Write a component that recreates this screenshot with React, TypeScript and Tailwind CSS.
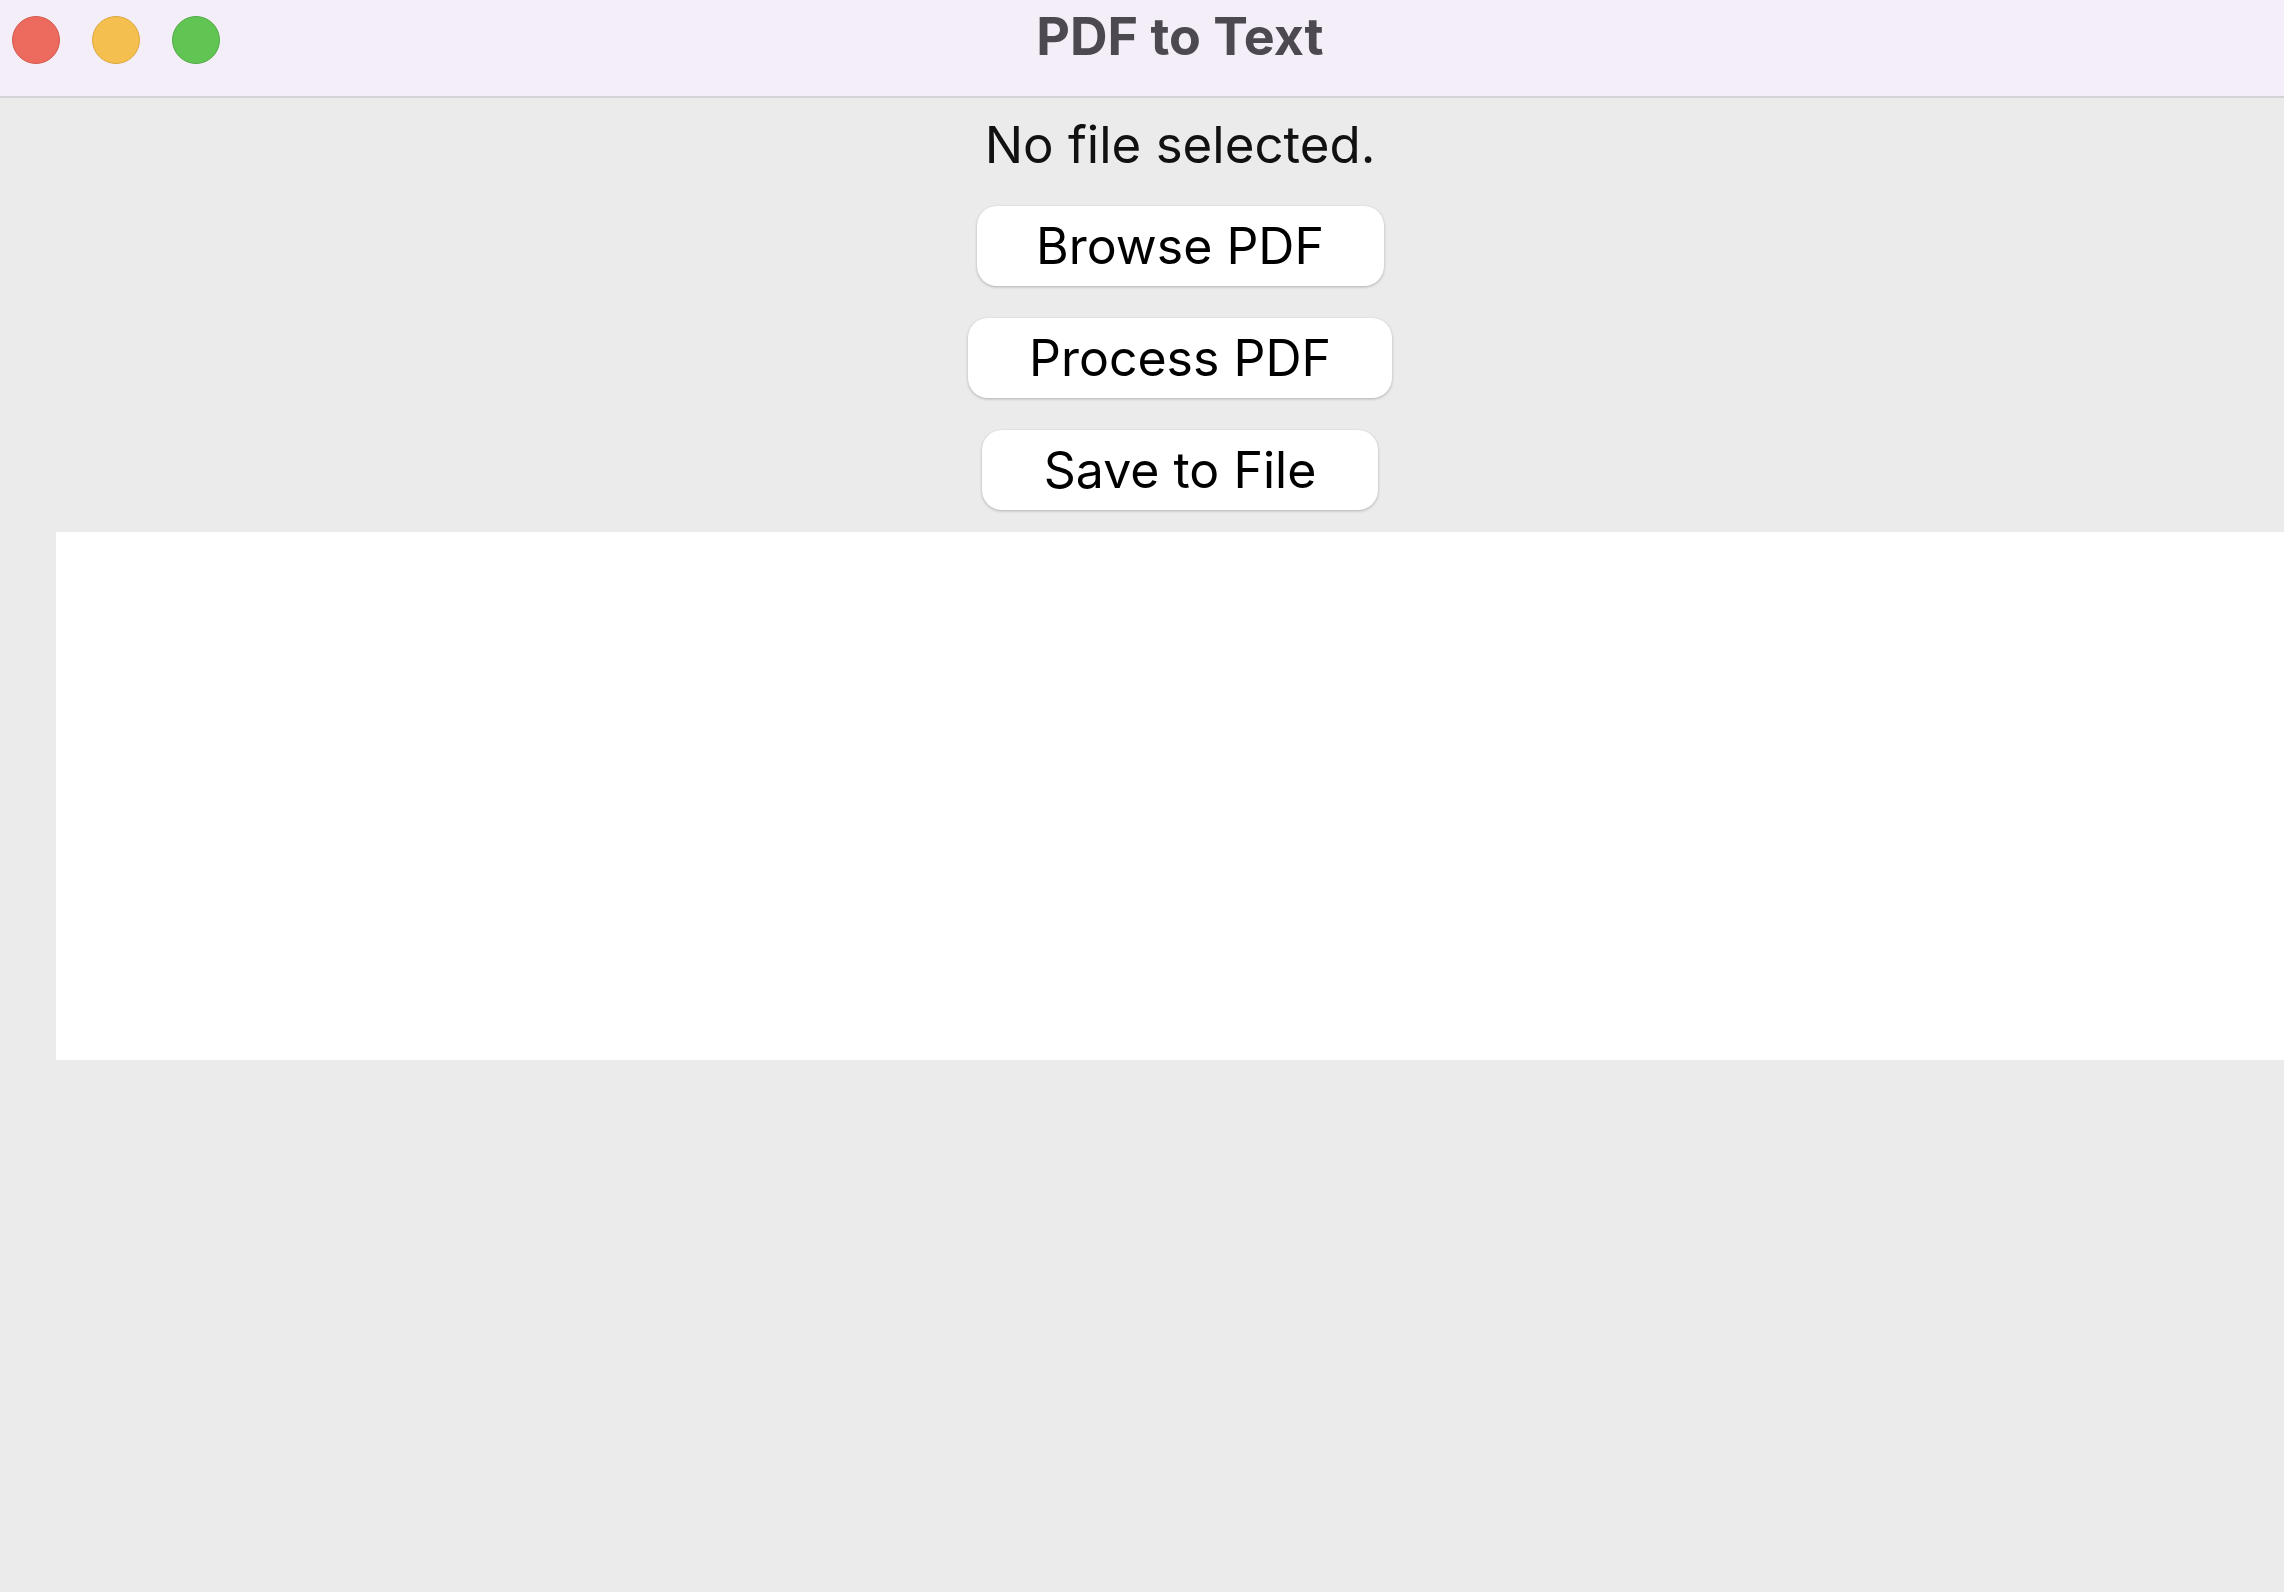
import React from "react";

export default function App() {
  return (
    <div className="w-[2284px] h-[1592px] overflow-hidden bg-[#ebebeb]" style={{ fontFamily: "Inter, 'Noto Sans', sans-serif" }}>
      <div className="w-[2360px] h-full flex flex-col">
        <div className="relative h-[98px] bg-[#f3eef8] border-b-[2px] border-[#d4d2d6] flex items-center justify-center shrink-0">
          <div className="absolute left-[12px] top-[16px] flex gap-[32px]">
            <div className="w-[48px] h-[48px] rounded-full bg-[#ec6a5e] border-[1.5px] border-[#d55b4f]" />
            <div className="w-[48px] h-[48px] rounded-full bg-[#f5bf4f] border-[1.5px] border-[#dba83d]" />
            <div className="w-[48px] h-[48px] rounded-full bg-[#61c554] border-[1.5px] border-[#50ad45]" />
          </div>
          <div className="text-[52px] leading-none font-bold text-[#4c4a50] -mt-[22px]">PDF to Text</div>
        </div>
        <div className="flex flex-col items-center pt-[17px]">
          <div className="h-[60px] text-[51px] leading-[60px] text-[#111]">No file selected.</div>
          <div className="flex flex-col items-center gap-[32px] mt-[31px]">
            <button className="w-[407px] h-[80px] rounded-[20px] bg-white text-[50px] text-black shadow-[0_1px_3px_rgba(0,0,0,0.25)] flex items-center justify-center">Browse PDF</button>
            <button className="w-[424px] h-[80px] rounded-[20px] bg-white text-[50px] text-black shadow-[0_1px_3px_rgba(0,0,0,0.25)] flex items-center justify-center">Process PDF</button>
            <button className="w-[396px] h-[80px] rounded-[20px] bg-white text-[50px] text-black shadow-[0_1px_3px_rgba(0,0,0,0.25)] flex items-center justify-center">Save to File</button>
          </div>
        </div>
        <div className="mx-[56px] mt-[22px] h-[528px] bg-white shrink-0" />
      </div>
    </div>
  );
}
